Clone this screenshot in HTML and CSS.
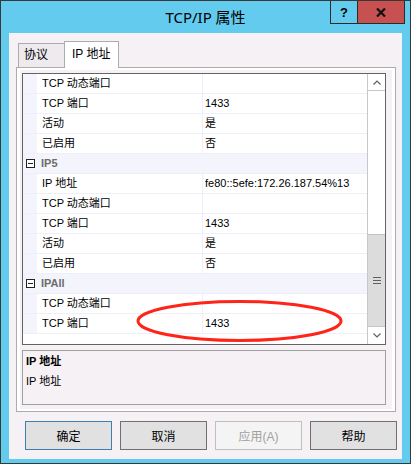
FILE: index.html
```html
<!DOCTYPE html>
<html>
<head>
<meta charset="utf-8">
<title>TCP/IP 属性</title>
<link rel="stylesheet" href="styles.css">
</head>
<body>
<div class="window">
  <div class="titlebar">
    <div class="title">TCP/IP 属性</div>
    <div class="caption">
      <div class="cbtn help">?</div>
      <div class="cbtn close">
        <svg width="10" height="9" viewBox="0 0 10 9"><path d="M1 0.5 L9 8.5 M9 0.5 L1 8.5" stroke="#111" stroke-width="2.2" fill="none"/></svg>
      </div>
    </div>
  </div>
  <div class="client">
    <div class="tabs">
      <div class="tab tab-off">协议</div>
      <div class="tab tab-on">IP 地址</div>
    </div>
    <div class="panel">
      <div class="panel-inner">
        <div class="grid">
          <div class="rows">
            <div class="row"><div class="gut"></div><div class="name">TCP 动态端口</div><div class="val"></div></div>
            <div class="row"><div class="gut"></div><div class="name">TCP 端口</div><div class="val">1433</div></div>
            <div class="row"><div class="gut"></div><div class="name">活动</div><div class="val">是</div></div>
            <div class="row"><div class="gut"></div><div class="name">已启用</div><div class="val">否</div></div>
            <div class="row cat"><div class="gut"><svg class="minus" width="9" height="9" viewBox="0 0 9 9"><rect x="0.5" y="0.5" width="8" height="8" fill="#fff" stroke="#222"/><path d="M2 4.5 H7" stroke="#222"/></svg></div><div class="name">IP5</div><div class="val"></div></div>
            <div class="row"><div class="gut"></div><div class="name">IP 地址</div><div class="val">fe80::5efe:172.26.187.54%13</div></div>
            <div class="row"><div class="gut"></div><div class="name">TCP 动态端口</div><div class="val"></div></div>
            <div class="row"><div class="gut"></div><div class="name">TCP 端口</div><div class="val">1433</div></div>
            <div class="row"><div class="gut"></div><div class="name">活动</div><div class="val">是</div></div>
            <div class="row"><div class="gut"></div><div class="name">已启用</div><div class="val">否</div></div>
            <div class="row cat"><div class="gut"><svg class="minus" width="9" height="9" viewBox="0 0 9 9"><rect x="0.5" y="0.5" width="8" height="8" fill="#fff" stroke="#222"/><path d="M2 4.5 H7" stroke="#222"/></svg></div><div class="name">IPAll</div><div class="val"></div></div>
            <div class="row"><div class="gut"></div><div class="name">TCP 动态端口</div><div class="val"></div></div>
            <div class="row"><div class="gut"></div><div class="name">TCP 端口</div><div class="val">1433</div></div>
          </div>
          <div class="scrollbar">
            <div class="sb-btn sb-up"><svg width="8" height="5" viewBox="0 0 8 5"><path d="M0.5 4.5 L4 1 L7.5 4.5" stroke="#606060" stroke-width="1.2" fill="none"/></svg></div>
            <div class="sb-track"></div>
            <div class="sb-thumb"><svg width="8" height="7" viewBox="0 0 8 7"><path d="M0 0.5 H8 M0 3.5 H8 M0 6.5 H8" stroke="#606060" stroke-width="1"/></svg></div>
            <div class="sb-btn sb-down"><svg width="8" height="5" viewBox="0 0 8 5"><path d="M0.5 0.5 L4 4 L7.5 0.5" stroke="#606060" stroke-width="1.2" fill="none"/></svg></div>
          </div>
          <svg class="mark" width="210" height="48" viewBox="0 0 210 48"><ellipse cx="104.5" cy="24" rx="101.5" ry="19.5" fill="none" stroke="#FF2418" stroke-width="3"/></svg>
        </div>
        <div class="desc">
          <div class="d1">IP 地址</div>
          <div class="d2">IP 地址</div>
        </div>
      </div>
    </div>
    <div class="buttons">
      <div class="btn btn-default">确定</div>
      <div class="btn">取消</div>
      <div class="btn btn-disabled">应用(A)</div>
      <div class="btn">帮助</div>
    </div>
  </div>
</div>
</body>
</html>
```
FILE: styles.css
```css
* { box-sizing: border-box; }
html, body { margin: 0; padding: 0; }
body {
  font-family: "Liberation Sans", "Noto Sans CJK SC", sans-serif;
  font-size: 11px;
  color: #000;
  background: #fff;
}
.window {
  width: 411px;
  height: 464px;
  background: #63CBEE;
  border: 1px solid #383838;
  padding: 0 8px 4px 8px;
  display: flex;
  flex-direction: column;
}
.titlebar {
  height: 32px;
  margin: 0 -8px;
  display: grid;
  grid-template-columns: 1fr auto 1fr;
}
.title {
  grid-column: 2;
  align-self: center;
  font-family: "Noto Sans", "Noto Sans CJK SC", sans-serif;
  font-size: 15px;
  line-height: 20px;
  color: #000;
}
.caption {
  grid-column: 3;
  justify-self: end;
  align-self: start;
  display: flex;
  margin-right: 5px;
  border: 1px solid #2a2a2a;
  border-top: 0;
}
.cbtn {
  height: 22px;
  display: flex;
  align-items: center;
  justify-content: center;
}
.help {
  width: 27px;
  border-right: 1px solid #2a2a2a;
  font-weight: bold;
  font-size: 13px;
}
.close {
  width: 46px;
  background: #C75050;
}
.client {
  flex: 1;
  background: #F5F1F5;
  padding: 8px 0 0 7px;
}
.tabs {
  display: flex;
  align-items: flex-end;
  height: 26px;
  padding-left: 2px;
}
.tab {
  border: 1px solid #ACACAC;
  border-bottom: 0;
  font-size: 12px;
  white-space: nowrap;
}
.tab-off {
  width: 46px;
  height: 24px;
  border-right: 0;
  background: #EEEAEE;
  padding-left: 5px;
  line-height: 22px;
}
.tab-on {
  width: 55px;
  height: 27px;
  margin-bottom: -1px;
  position: relative;
  z-index: 1;
  background: #fff;
  padding-left: 7px;
  line-height: 24px;
}
.panel {
  width: 380px;
  height: 345px;
  border: 1px solid #ACACAC;
  background: #fff;
  padding: 2px 3px 2px 3px;
}
.panel-inner {
  height: 100%;
  background: #F5F1F5;
  padding: 3px 6px 4px 2px;
  display: flex;
  flex-direction: column;
}
.grid {
  width: 364px;
  height: 272px;
  border: 1px solid #646464;
  background: #fff;
  display: flex;
  position: relative;
}
.rows {
  width: 344px;
}
.row {
  display: grid;
  grid-template-columns: 14px 165px 165px;
  height: 20px;
  border-bottom: 1px solid #EFEFF9;
}
.gut {
  background: #F4F4FC;
  display: flex;
  align-items: center;
  padding-left: 3px;
}
.name {
  padding-left: 5px;
  line-height: 19px;
  white-space: nowrap;
}
.val {
  border-left: 1px solid #EFEFF9;
  padding-left: 2px;
  line-height: 19px;
  white-space: nowrap;
}
.cat {
  background: #F4F4FC;
}
.cat .name {
  font-weight: bold;
  color: #6D6D6D;
  padding-left: 4px;
}
.cat .val {
  border-left: 0;
}
.scrollbar {
  width: 18px;
  border-left: 1px solid #C8C8C8;
  display: flex;
  flex-direction: column;
}
.sb-btn {
  height: 17px;
  display: flex;
  align-items: center;
  justify-content: center;
}
.sb-up {
  border-bottom: 1px solid #C8C8C8;
}
.sb-track {
  height: 143px;
}
.sb-thumb {
  height: 93px;
  background: #DCDCDC;
  border-top: 1px solid #C4C4C4;
  border-bottom: 1px solid #C4C4C4;
  display: flex;
  align-items: center;
  justify-content: center;
}
.mark {
  position: absolute;
  left: 112px;
  top: 223px;
  overflow: visible;
  z-index: 2;
}
.desc {
  margin-top: 5px;
  height: 55px;
  border: 1px solid #A0A0A0;
  padding: 3px 0 0 3px;
}
.d1 {
  font-weight: bold;
  line-height: 14px;
}
.d2 {
  margin-top: 6px;
  line-height: 14px;
}
.buttons {
  display: flex;
  gap: 8px;
  margin: 9px 0 0 9px;
}
.btn {
  width: 87px;
  height: 29px;
  border: 1px solid #707070;
  background: #E1E1E1;
  font-size: 12px;
  display: flex;
  align-items: center;
  justify-content: center;
}
.btn-default {
  border-color: #3C7FB1;
}
.btn-disabled {
  background: #F4F4F4;
  border-color: #BFBFBF;
  color: #A0A0A0;
}
```
